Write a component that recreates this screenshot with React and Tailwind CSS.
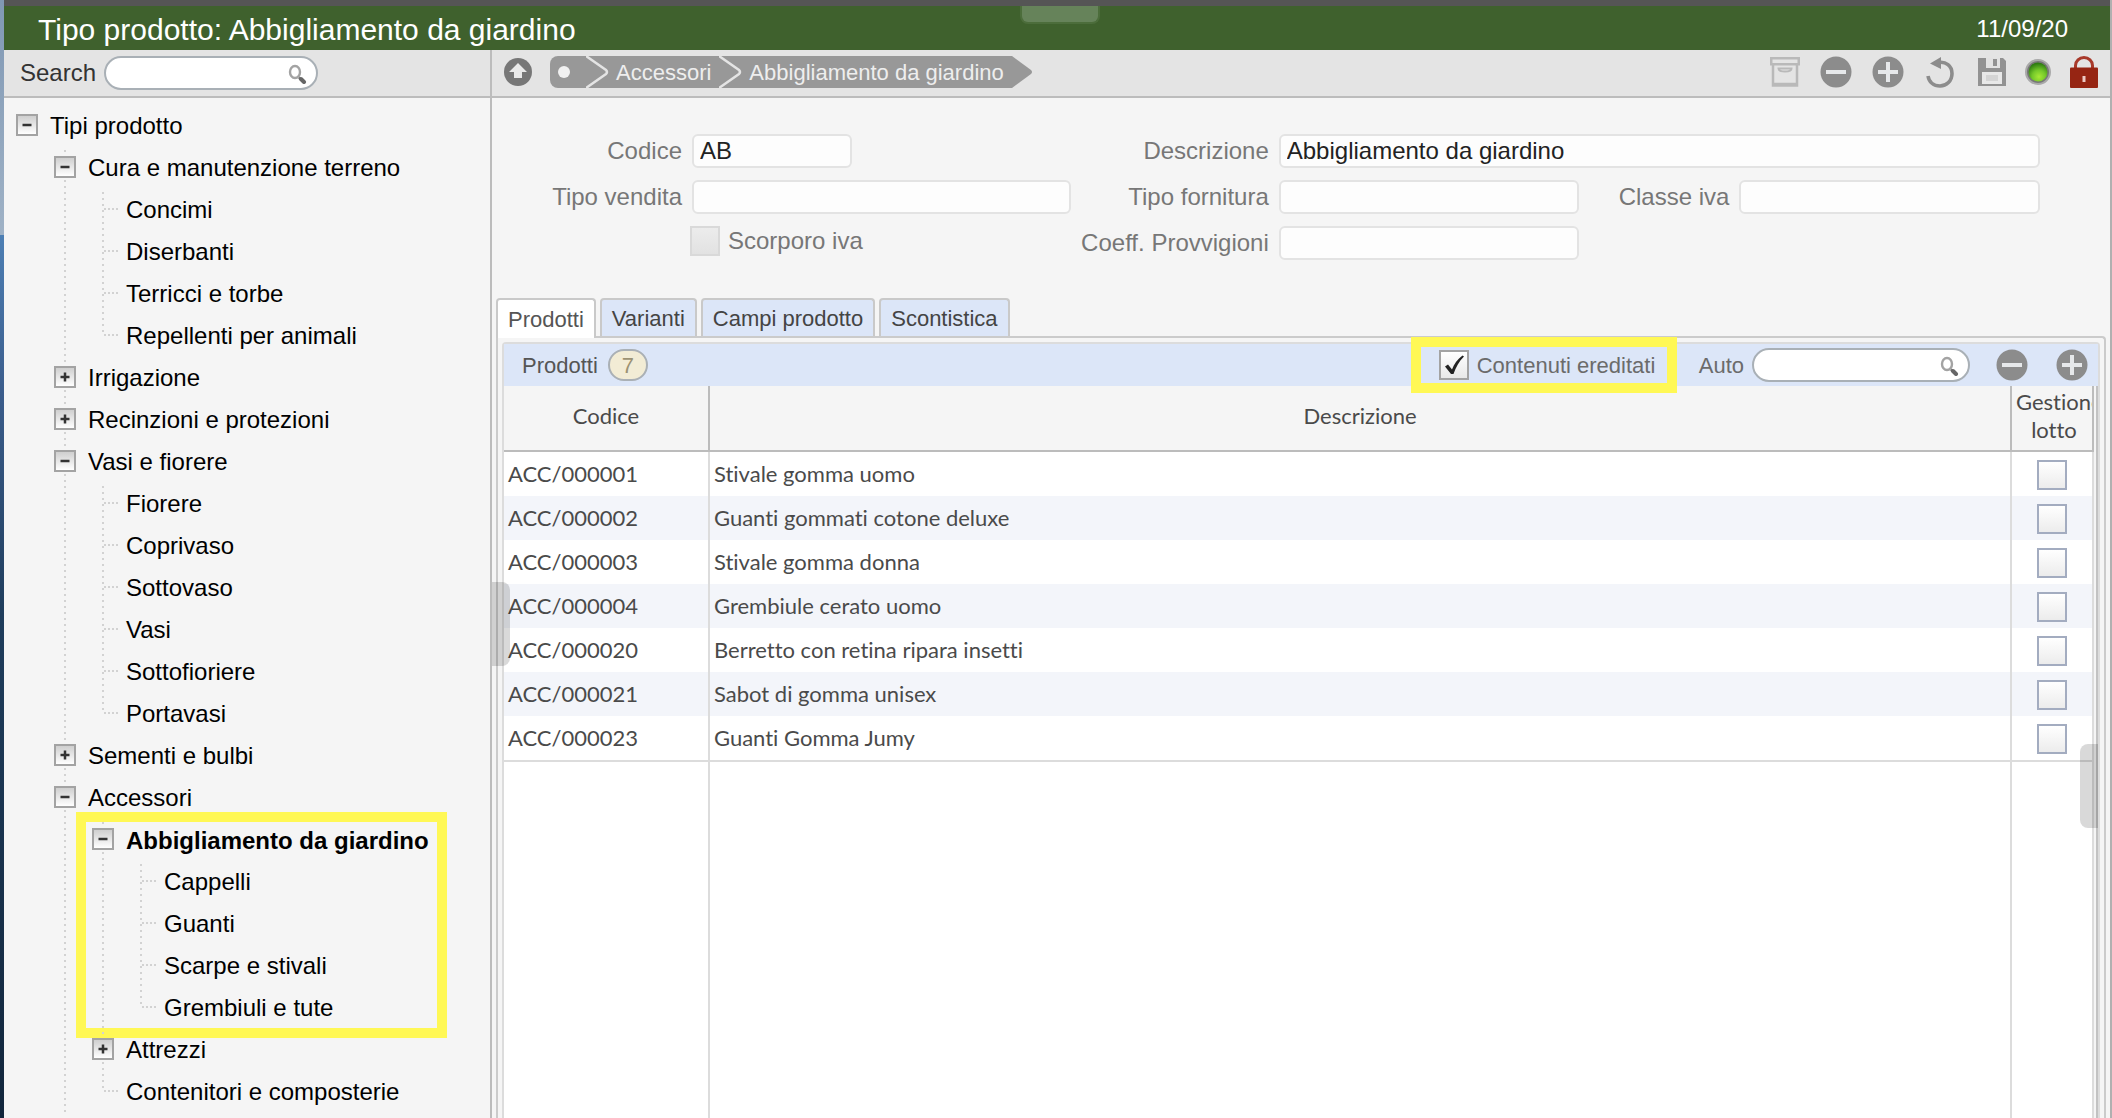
import React, { useState } from 'react';
import clsx from 'clsx';

const TREE = {
  label: 'Tipi prodotto',
  open: true,
  children: [
    {
      label: 'Cura e manutenzione terreno',
      open: true,
      children: [
        { label: 'Concimi' },
        { label: 'Diserbanti' },
        { label: 'Terricci e torbe' },
        { label: 'Repellenti per animali' },
      ],
    },
    { label: 'Irrigazione', children: [] },
    { label: 'Recinzioni e protezioni', children: [] },
    {
      label: 'Vasi e fiorere',
      open: true,
      children: [
        { label: 'Fiorere' },
        { label: 'Coprivaso' },
        { label: 'Sottovaso' },
        { label: 'Vasi' },
        { label: 'Sottofioriere' },
        { label: 'Portavasi' },
      ],
    },
    { label: 'Sementi e bulbi', children: [] },
    {
      label: 'Accessori',
      open: true,
      more: true,
      children: [
        {
          label: 'Abbigliamento da giardino',
          open: true,
          selected: true,
          children: [
            { label: 'Cappelli' },
            { label: 'Guanti' },
            { label: 'Scarpe e stivali' },
            { label: 'Grembiuli e tute' },
          ],
        },
        { label: 'Attrezzi', children: [] },
        { label: 'Contenitori e composterie' },
      ],
    },
  ],
};

const PRODUCTS = [
  { code: 'ACC/000001', name: 'Stivale gomma uomo' },
  { code: 'ACC/000002', name: 'Guanti gommati cotone deluxe' },
  { code: 'ACC/000003', name: 'Stivale gomma donna' },
  { code: 'ACC/000004', name: 'Grembiule cerato uomo' },
  { code: 'ACC/000020', name: 'Berretto con retina ripara insetti' },
  { code: 'ACC/000021', name: 'Sabot di gomma unisex' },
  { code: 'ACC/000023', name: 'Guanti Gomma Jumy' },
];

const TABS = ['Prodotti', 'Varianti', 'Campi prodotto', 'Scontistica'];

const DOTS_Y = 'bg-[linear-gradient(#d2d2d2_2px,transparent_2px)] bg-[length:2px_6px] bg-repeat-y';

const SearchIcon = () => (
  <svg width="20" height="22" viewBox="0 0 20 22" fill="none">
    <ellipse cx="7" cy="10" rx="5" ry="6" stroke="#a3a3a3" strokeWidth="2.4" />
    <path d="M11 15.500l2 2" stroke="#777" strokeWidth="2.500" />
    <path d="M13 17l3 3" stroke="#666" strokeWidth="4" strokeLinecap="round" />
  </svg>
);

const MinusCircle = () => (
  <svg width="32" height="32" viewBox="0 0 32 32">
    <circle cx="16" cy="16" r="15.5" fill="#8c8c8c" />
    <rect x="6" y="14" width="20" height="4" fill="#e6e8ea" />
  </svg>
);

const PlusCircle = () => (
  <svg width="32" height="32" viewBox="0 0 32 32">
    <circle cx="16" cy="16" r="15.5" fill="#8c8c8c" />
    <path d="M14 6h4v8h8v4h-8v8h-4v-8H6v-4h8z" fill="#e6e8ea" />
  </svg>
);

const ArchiveIcon = () => (
  <svg width="30" height="30" viewBox="0 0 30 30" fill="none" stroke="#b9b9b9" strokeWidth="2.500">
    <rect x="1.250" y="1.250" width="27.500" height="6" />
    <path d="M3 7v21.500h24V7" />
    <path d="M8.500 11.500h13c0 4-13 4-13 0z" strokeWidth="2" />
    <path d="M3 27h24" />
  </svg>
);

const UndoIcon = () => (
  <svg width="28" height="32" viewBox="0 0 28 32" fill="none">
    <path d="M12 6.500C20 5 26 10 26 17.500 26 25 20.500 30 14 30 7.500 30 3 26 2 20" stroke="#8c8c8c" strokeWidth="3.600" />
    <path d="M15 1v12L4 7.500z" fill="#8c8c8c" />
  </svg>
);

const SaveIcon = () => (
  <svg width="28" height="28" viewBox="0 0 28 28">
    <path d="M0 0h25l3 3v25H0z" fill="#929292" />
    <rect x="8" y="0" width="14" height="10" fill="#e2e2e2" />
    <rect x="15" y="1" width="4" height="7" fill="#929292" />
    <rect x="4" y="14" width="20" height="12" fill="#e8e8e8" />
    <rect x="8" y="17" width="12" height="6" fill="#d4d4d4" />
  </svg>
);

const LedIcon = () => (
  <svg width="28" height="28" viewBox="0 0 28 28">
    <defs>
      <radialGradient id="led" cx="0.55" cy="0.75" r="0.7">
        <stop offset="0" stopColor="#a6e836" />
        <stop offset="0.5" stopColor="#74c82a" />
        <stop offset="1" stopColor="#2f7d12" />
      </radialGradient>
    </defs>
    <circle cx="14" cy="14" r="12" fill="#777" stroke="#a9a9a9" strokeWidth="2" />
    <circle cx="14" cy="14" r="9.500" fill="url(#led)" />
  </svg>
);

const LockIcon = () => (
  <svg width="28" height="32" viewBox="0 0 28 32">
    <path d="M5.500 13V9.500a8.500 8 0 0 1 17 0V13" fill="none" stroke="#a8392a" strokeWidth="3" />
    <rect x="0" y="11.500" width="28" height="20.500" rx="1" fill="#962513" />
    <rect x="12.500" y="20" width="3" height="6" fill="#ecc9c4" />
  </svg>
);

const UpIcon = () => (
  <svg width="28" height="28" viewBox="0 0 28 28">
    <circle cx="14" cy="14" r="14" fill="#777" />
    <path d="M14 5l9 9h-5v6h-8v-6H5z" fill="#e9e9e9" />
  </svg>
);

const Toggle = ({ open, label, onClick }) => (
  <button
    onClick={onClick}
    aria-label={label}
    aria-expanded={open}
    className="flex size-[22px] items-center justify-center border-2 border-[#a3a3a3] bg-linear-to-b from-[#cfcfcf] to-white"
  >
    <svg width="12" height="12" viewBox="0 0 12 12" stroke="#333" strokeWidth="2.500">
      <path d="M1.500 6h9" />
      {!open && <path d="M6 1.500v9" />}
    </svg>
  </button>
);

const TreeNode = ({ node, root, last }) => {
  const [open, setOpen] = useState(!!node.open);
  const branch = !!node.children;

  return (
    <li className="relative flex">
      <div
        className={clsx(
          'w-7 shrink-0 bg-[position:10px_4px]',
          !root && (!last || node.more) && DOTS_Y
        )}
      >
        {branch ? (
          <div className="pt-2.5">
            <Toggle open={open} label={node.label} onClick={() => setOpen(!open)} />
          </div>
        ) : (
          <div className={clsx('flex h-[22px] items-end bg-[position:10px_4px] pl-3', last && DOTS_Y)}>
            <div className="h-0.5 flex-1 bg-[linear-gradient(to_right,#d2d2d2_2px,transparent_2px)] bg-[length:4px_2px]" />
          </div>
        )}
      </div>
      <div className="ml-1.5">
        <div
          className={clsx(
            'flex h-[42px] items-center whitespace-nowrap',
            node.selected ? 'pt-1 font-bold' : 'pt-0.5'
          )}
        >
          {node.label}
        </div>
        {open && branch && (
          <ul className="pl-1">
            {node.children.map((child, i) => (
              <TreeNode key={child.label} node={child} last={i === node.children.length - 1} />
            ))}
          </ul>
        )}
      </div>
      {node.selected && (
        <div className="pointer-events-none absolute -top-1.5 -bottom-2.5 -left-4 w-[371px] border-10 border-[#fff855]" />
      )}
    </li>
  );
};

const SearchBox = ({ id, className }) => (
  <div
    className={clsx(
      'flex h-[34px] items-center rounded-full border-2 border-[#a9b0b6] bg-white pr-2 pl-3',
      className
    )}
  >
    <input id={id} type="text" className="min-w-0 flex-1 bg-transparent outline-none" />
    <SearchIcon />
  </div>
);

const FIELD = 'h-[34px] min-w-0 rounded-md border-2 border-[#e3e3e3] bg-[#fdfdfd] px-1.5 text-[#222] outline-none';

const Field = ({ id, label, value, className }) => (
  <>
    <label htmlFor={id} className="text-right whitespace-nowrap">{label}</label>
    <input id={id} type="text" defaultValue={value} className={clsx(FIELD, className)} />
  </>
);

const Chevron = ({ last }) => (
  <svg width="24" height="32" viewBox="0 0 24 32" className="shrink-0">
    {last ? (
      <path d="M0 0l19 14q2 2 0 4L0 32z" fill="#989898" />
    ) : (
      <>
        <rect width="24" height="32" fill="#989898" />
        <path d="M0 0l20 14q2 2 0 4L0 32" fill="none" stroke="#e4e4e4" strokeWidth="2.500" />
      </>
    )}
  </svg>
);

const Toolbar = () => (
  <div className="flex h-12 shrink-0 items-center border-b-2 border-[#bcbcbc] bg-[#e4e4e4] px-3 pb-0.5">
    <button aria-label="Su"><UpIcon /></button>
    <nav className="ml-[18px] flex h-8 items-center text-[22px] text-[#eee]">
      <a href="#root" aria-label="Radice" className="flex h-8 w-9 items-center rounded-l-lg bg-[#989898] pl-2">
        <span className="size-3 rounded-full bg-[#f0f0f0]" />
      </a>
      <Chevron />
      <a href="#accessori" className="flex h-8 items-center bg-[#989898] pr-2 pl-1.5">Accessori</a>
      <Chevron />
      <a href="#abbigliamento" className="flex h-8 items-center bg-[#989898] pr-2 pl-1.5">Abbigliamento da giardino</a>
      <Chevron last />
    </nav>
    <div className="ml-auto flex items-center gap-5">
      <button aria-label="Archivia"><ArchiveIcon /></button>
      <button aria-label="Elimina"><MinusCircle /></button>
      <button aria-label="Aggiungi"><PlusCircle /></button>
      <button aria-label="Ripristina" className="ml-0.5"><UndoIcon /></button>
      <button aria-label="Salva" className="ml-1"><SaveIcon /></button>
      <button aria-label="Stato" className="-ml-0.5"><LedIcon /></button>
      <button aria-label="Blocca" className="-ml-0.5"><LockIcon /></button>
    </div>
  </div>
);

const ProductForm = () => (
  <form className="grid grid-cols-[190px_378fr_188px_300fr_140px_300fr] items-center gap-x-2.5 gap-y-3 pt-9 pr-[70px] text-2xl text-[#777]">
    <Field id="codice" label="Codice" value="AB" className="w-40" />
    <Field id="descrizione" label="Descrizione" value="Abbigliamento da giardino" className="col-span-3" />
    <Field id="vendita" label="Tipo vendita" />
    <Field id="fornitura" label="Tipo fornitura" />
    <Field id="classe" label="Classe iva" />
    <div className="col-start-2 -mt-1 -ml-0.5 flex items-center gap-2">
      <input
        id="scorporo"
        type="checkbox"
        className="size-[30px] appearance-none border-2 border-[#d9d9d9] bg-linear-to-b from-[#ececec] to-[#e2e2e2]"
      />
      <label htmlFor="scorporo">Scorporo iva</label>
    </div>
    <Field id="coeff" label="Coeff. Provvigioni" />
  </form>
);

const GridHeader = () => {
  const [inherited, setInherited] = useState(true);

  return (
    <div className="relative z-10 flex h-[42px] shrink-0 items-center bg-[#dce6f8] pr-2.5 pl-[18px] text-[22px] text-[#555]">
      <span>Prodotti</span>
      <span className="ml-2.5 flex h-8 w-10 items-center justify-center rounded-full border-2 border-[#aab0b5] bg-[#f2ecd5] text-[#9c9273]">
        7
      </span>
      <div className="-my-2 ml-auto flex h-14 w-[266px] items-center border-10 border-[#fff855] pl-[18px] text-[#6b6b6b]">
        <div className="grid size-[30px] shrink-0">
          <input
            id="ereditati"
            type="checkbox"
            checked={inherited}
            onChange={(e) => setInherited(e.target.checked)}
            className="col-start-1 row-start-1 size-[30px] appearance-none border-2 border-[#a3a3a3] bg-linear-to-b from-white to-[#e8e8e8]"
          />
          {inherited && (
            <svg viewBox="0 0 30 30" className="pointer-events-none col-start-1 row-start-1">
              <path d="M6 16.500l3-2 4 5C15 14 18.500 9 23.500 5.500L25 6.500C20 11.500 17 17 14.500 24H12z" fill="#222" />
            </svg>
          )}
        </div>
        <label htmlFor="ereditati" className="ml-2 whitespace-nowrap">Contenuti ereditati</label>
      </div>
      <label htmlFor="auto" className="ml-[22px] text-[#6b6b6b]">Auto</label>
      <SearchBox id="auto" className="ml-2 w-[218px]" />
      <button aria-label="Rimuovi riga" className="ml-[26px]"><MinusCircle /></button>
      <button aria-label="Aggiungi riga" className="ml-7"><PlusCircle /></button>
    </div>
  );
};

const HEAD = 'h-[66px] overflow-hidden border-r-2 border-b-2 border-[#bcbcbc] bg-[#f5f5f5] pt-0 pr-0 pb-1 leading-7 font-normal';
const CELL = 'h-11 border-r-2 border-[#dcdcdc]';
const FILLER = 'border-t-2 border-r-2 border-[#dcdcdc] p-0';

const ProductTable = () => (
  <table className="h-full w-full table-fixed border-separate border-spacing-0 bg-white font-[Lato,sans-serif] text-[22px] text-[#4a4a4a] [font-variant-ligatures:none]">
    <colgroup>
      <col className="w-[206px]" />
      <col />
      <col className="w-[82px]" />
    </colgroup>
    <thead>
      <tr>
        <th className={clsx(HEAD, 'pl-0')}>Codice</th>
        <th className={clsx(HEAD, 'pl-0')}>Descrizione</th>
        <th className={clsx(HEAD, 'pl-1')}>Gestione lotto</th>
      </tr>
    </thead>
    <tbody>
      {PRODUCTS.map((product) => (
        <tr key={product.code} className="even:bg-[#f3f5fa]">
          <td className={clsx(CELL, 'pt-0 pr-0 pb-0.5 pl-1')}>{product.code}</td>
          <td className={clsx(CELL, 'pt-0 pr-0 pb-0.5 pl-1')}>{product.name}</td>
          <td className={clsx(CELL, 'px-0 pt-0.5 pb-0')}>
            <input
              type="checkbox"
              aria-label={`Gestione lotto ${product.code}`}
              className="mx-auto block size-[30px] appearance-none border-2 border-[#a3acc0] bg-linear-to-b from-white to-[#ececec]"
            />
          </td>
        </tr>
      ))}
      <tr className="h-full">
        <td className={FILLER} />
        <td className={FILLER} />
        <td className={FILLER} />
      </tr>
    </tbody>
  </table>
);

export default function App() {
  const [tab, setTab] = useState('Prodotti');

  return (
    <div className="flex h-screen overflow-hidden bg-[#f5f5f5] font-['Liberation_Sans',Arial,sans-serif]">
      <div className="w-1 shrink-0 bg-[linear-gradient(#8098b4,#9fb2c6_21%,#4d7fb4_21%,#3b5d8c_35%,#1f3d5c_55%,#12263c)]" />

      <div className="flex min-w-0 flex-1 flex-col">
        <header className="relative flex h-[50px] shrink-0 items-center justify-between border-t-6 border-[#555] bg-[#3f612d] pt-0.5 pr-[42px] pl-[34px] text-white">
          <h1 className="text-[30px]">Tipo prodotto: Abbigliamento da giardino</h1>
          <time className="text-2xl">11/09/20</time>
          <div className="absolute top-0 left-[1016px] h-[18px] w-20 rounded-b-lg border-2 border-t-0 border-[#4c6d3b] bg-[#66835a]" />
        </header>

        <div className="flex min-h-0 flex-1">
          <aside className="flex w-[488px] shrink-0 flex-col border-r-2 border-[#bcbcbc]">
            <div className="flex h-12 shrink-0 items-center border-b-2 border-[#bcbcbc] bg-[#e4e4e4] pl-4 text-2xl text-[#333]">
              <label htmlFor="search">Search</label>
              <SearchBox id="search" className="ml-2 w-[214px]" />
            </div>
            <ul className="min-h-0 flex-1 overflow-hidden pt-1.5 pl-3 text-2xl text-black">
              <TreeNode node={TREE} root />
            </ul>
          </aside>

          <main className="relative flex min-w-0 flex-1 flex-col">
            <Toolbar />
            <ProductForm />

            <div className="mt-[38px] flex h-10 shrink-0 items-end gap-1 pl-1 text-[22px]">
              {TABS.map((name) => (
                <button
                  key={name}
                  onClick={() => setTab(name)}
                  className={clsx(
                    'rounded-t border-2 border-b-0 border-[#c9c9c9] px-2.5',
                    tab === name ? 'z-10 h-10 bg-white text-[#555]' : 'mb-0.5 h-[38px] bg-[#dce6f8] text-[#444]'
                  )}
                >
                  {name}
                </button>
              ))}
            </div>

            <section className="-mt-0.5 mr-1 ml-1 flex min-h-0 flex-1 flex-col rounded-tr border-2 border-b-0 border-[#cbcbcb] px-1 pt-1">
              <div className="flex min-h-0 flex-1 flex-col rounded-t border-2 border-b-0 border-[#dcdcdc]">
                <GridHeader />
                <div className="min-h-0 flex-1 border-r-2 border-[#c2c2c2] pr-0.5">
                  <ProductTable />
                </div>
              </div>
            </section>

            <div className="absolute top-[532px] left-0 z-20 h-[84px] w-[18px] rounded-r-lg bg-black/15" />
            <div className="absolute top-[694px] right-3 z-20 h-[84px] w-[18px] rounded-l-lg bg-black/15" />
          </main>
        </div>
      </div>

      <div className="w-0.5 shrink-0 bg-[#b0b0b0]" />
    </div>
  );
}
